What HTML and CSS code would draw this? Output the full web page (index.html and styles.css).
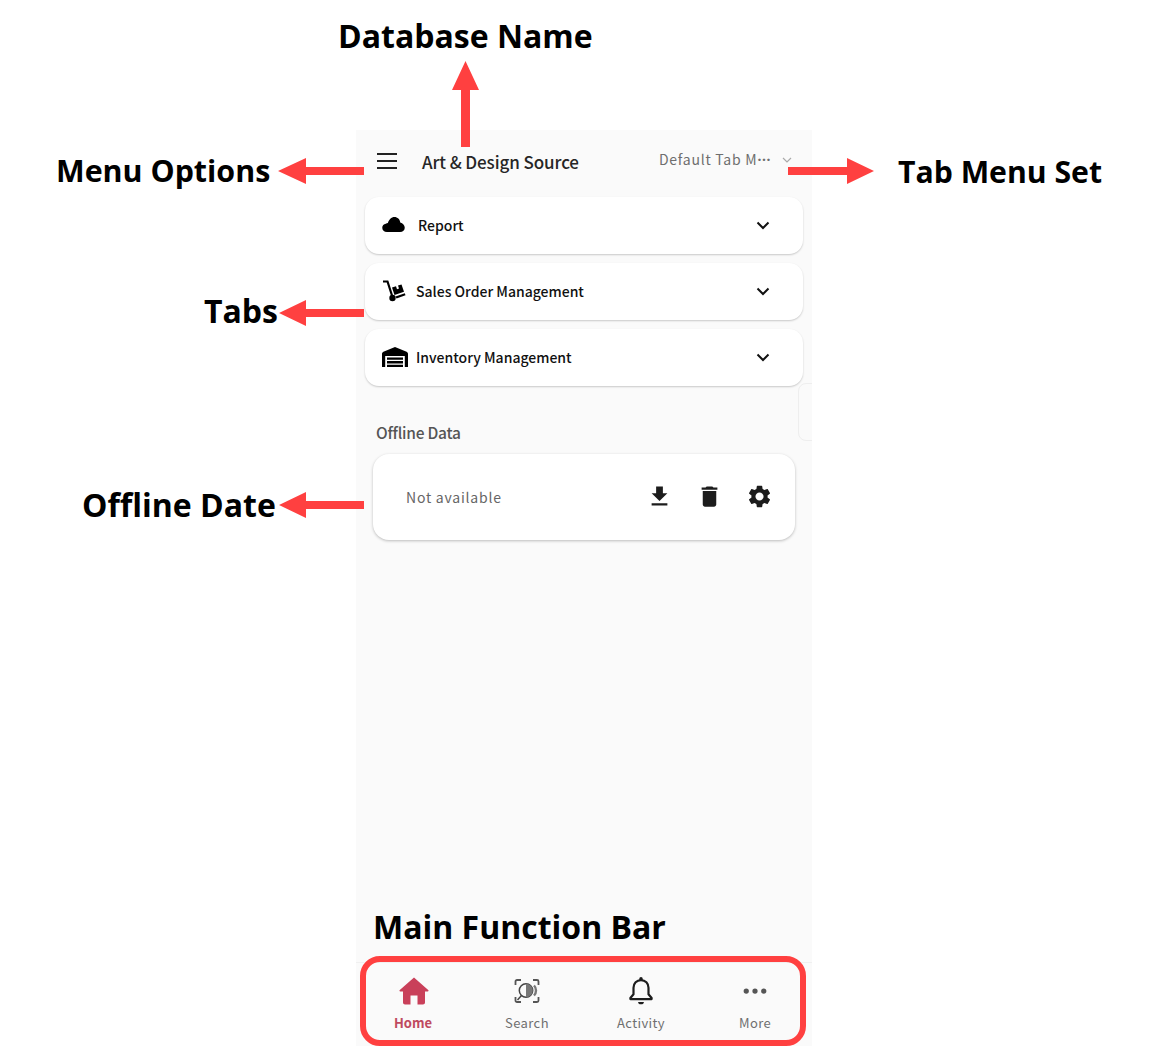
FILE: index.html
```html
<!DOCTYPE html>
<html lang="en">
<head>
<meta charset="utf-8">
<title>Home screen guide</title>
<link rel="stylesheet" href="styles.css">
</head>
<body>
<main class="canvas">
  <section class="phone">
    <header class="topbar">
      <svg class="menu-icon" viewBox="0 0 20 16"><path d="M0 1h20M0 8h20M0 15h20"/></svg>
      <h1 class="db-name">Art &amp; Design Source</h1>
      <span class="tab-set">Default Tab M<span class="tab-dots">···</span></span>
      <svg class="tab-set-caret" viewBox="0 0 10 6"><path d="M1 1l4 4 4-4"/></svg>
    </header>

    <div class="tabs">
      <div class="tab tab-report">
        <svg class="tab-icon icon-cloud" viewBox="0 0 24 16"><path d="M5 16C2 16 0 14 0 11.500 0 9.300 1.600 7.500 3.800 7.200 4.500 6.800 5.200 6.500 6 6.500 7 2.800 9.700 0 13 0c3.300 0 5.800 2.500 6.200 5.800C22 6.600 24 8.900 24 11.400 24 14 22 16 19 16z"/></svg>
        <span class="tab-label">Report</span>
        <svg class="chevron" viewBox="0 0 14 9"><path d="M1.500 1.500L7 7l5.500-5.500"/></svg>
      </div>
      <div class="tab tab-sales">
        <svg class="tab-icon icon-dolly" viewBox="0 0 24 24"><path class="dolly-line" d="M1 2.500h4.500l4.500 14"/><circle cx="10.500" cy="19" r="3.200"/><path d="M14.500 19.500l9-3.200-.7-2-9.300 3.200zM10 8.500l4-1.300 1 3 2-.7-1-3 3.500-1.100 2.500 7.400-9.500 3.200z"/></svg>
        <span class="tab-label">Sales Order Management</span>
        <svg class="chevron" viewBox="0 0 14 9"><path d="M1.500 1.500L7 7l5.500-5.500"/></svg>
      </div>
      <div class="tab tab-inv">
        <svg class="tab-icon icon-ware" viewBox="0 0 26 20"><path d="M0 20V7c0-1 .5-1.800 1.400-2.300L13 0l11.600 4.700c.9.5 1.400 1.300 1.400 2.300V20h-3.200V9H3.200v11zM5 10.500h16v2.300H5zM5 14.100h16v2.300H5zM5 17.700h16V20H5z"/></svg>
        <span class="tab-label">Inventory Management</span>
        <svg class="chevron" viewBox="0 0 14 9"><path d="M1.500 1.500L7 7l5.500-5.500"/></svg>
      </div>
    </div>

    <div class="peek"></div>

    <h2 class="offline-title">Offline Data</h2>
    <div class="offline-card">
      <span class="offline-text">Not available</span>
      <div class="offline-actions">
        <svg class="action" viewBox="0 0 24 24"><path d="M19 9h-4V3H9v6H5l7 7 7-7zM5 18v2h14v-2H5z"/></svg>
        <svg class="action" viewBox="0 0 24 24"><path d="M6 19c0 1.100.9 2 2 2h8c1.100 0 2-.9 2-2V7H6v12zM19 4h-3.500l-1-1h-5l-1 1H5v2h14V4z"/></svg>
        <svg class="action" viewBox="0 0 24 24"><path d="M19.140 12.940c.04-.3.06-.61.06-.94 0-.32-.02-.64-.07-.94l2.030-1.580c.18-.14.23-.41.12-.61l-1.920-3.320c-.12-.22-.37-.29-.59-.22l-2.390.96c-.5-.38-1.030-.7-1.620-.94l-.36-2.540c-.04-.24-.24-.41-.48-.41h-3.840c-.24 0-.43.17-.47.41l-.36 2.540c-.59.24-1.130.57-1.620.94l-2.390-.96c-.22-.08-.47 0-.59.22L2.740 8.870c-.12.21-.08.47.12.61l2.030 1.580c-.05.3-.09.63-.09.94s.02.64.07.94l-2.030 1.580c-.18.14-.23.41-.12.61l1.920 3.320c.12.22.37.29.59.22l2.390-.96c.5.38 1.030.7 1.620.94l.36 2.540c.05.24.24.41.48.41h3.840c.24 0 .44-.17.47-.41l.36-2.540c.59-.24 1.130-.56 1.620-.94l2.390.96c.22.08.47 0 .59-.22l1.920-3.320c.12-.22.07-.47-.12-.61l-2.010-1.580zM12 15.600c-1.980 0-3.600-1.620-3.600-3.600s1.620-3.600 3.600-3.600 3.600 1.620 3.600 3.600-1.620 3.600-3.600 3.600z"/></svg>
      </div>
    </div>

    <nav class="bottom-nav">
      <div class="nav-item nav-active">
        <svg class="nav-icon nav-home" viewBox="0 0 30 27"><path d="M15 0L.8 12.600c-.7.6-.3 1.400.5 1.400H4v11c0 1.100.9 2 2 2h5.500v-9h7v9H24c1.100 0 2-.9 2-2V14h2.700c.8 0 1.200-.8.5-1.400z"/></svg>
        <span class="nav-label">Home</span>
      </div>
      <div class="nav-item">
        <svg class="nav-icon nav-scan" viewBox="0 0 30 30"><path class="scan-corners" d="M3.500 9V5.500c0-.8.7-1.500 1.500-1.500h4M21 4h4c.8 0 1.500.7 1.500 1.500V9M26.500 21v3.500c0 .8-.7 1.500-1.500 1.500h-4M9 26H5c-.8 0-1.500-.7-1.500-1.500V21"/><circle class="scan-lens" cx="14" cy="14.500" r="6.700"/><path class="scan-fill" d="M14 7.800c3.700 0 6.700 3 6.700 6.700s-3 6.700-6.700 6.700z"/><path class="scan-bars" d="M22 9.500c1.300 1.300 2 3 2 5s-.7 3.700-2 5"/><path class="scan-tail" d="M9.500 19.500L5.500 24"/></svg>
        <span class="nav-label">Search</span>
      </div>
      <div class="nav-item">
        <svg class="nav-icon nav-bell" viewBox="0 0 24 26"><path class="bell-body" d="M12 3.500c-3.800 0-6.500 3-6.500 6.700v5.600L2.800 19v1h18.400v-1l-2.700-3.200v-5.600c0-3.700-2.700-6.700-6.500-6.700z"/><path class="bell-solid" d="M10.500 3.500V2.300a1.500 1.500 0 0 1 3 0v1.200zM9.500 22.500h5a2.500 2 0 0 1-5 0z"/></svg>
        <span class="nav-label">Activity</span>
      </div>
      <div class="nav-item">
        <svg class="nav-icon nav-more" viewBox="0 0 24 24"><circle cx="5" cy="12" r="2.100"/><circle cx="12" cy="12" r="2.100"/><circle cx="19" cy="12" r="2.100"/></svg>
        <span class="nav-label">More</span>
      </div>
    </nav>
  </section>

  <span class="note note-db">Database Name</span>
  <span class="note note-menu">Menu Options</span>
  <span class="note note-set">Tab Menu Set</span>
  <span class="note note-tabs">Tabs</span>
  <span class="note note-offline">Offline Date</span>
  <span class="note note-bar">Main Function Bar</span>

  <svg class="arrows" viewBox="0 0 1151 1064">
    <polygon points="465.500,61 479,90 470,90 470,147 461,147 461,90 452,90"/>
    <polygon points="278,171 306,158 306,167 364,167 364,175 306,175 306,184"/>
    <polygon points="874,171 847,158 847,167 788,167 788,175 847,175 847,184"/>
    <polygon points="279,313 306,300 306,309 364,309 364,317 306,317 306,326"/>
    <polygon points="279,505 306,492 306,501 364,501 364,509 306,509 306,518"/>
  </svg>
  <div class="bar-frame"></div>
</main>
</body>
</html>
```

FILE: styles.css
```css
* { box-sizing: border-box; }

html, body {
  margin: 0;
  background: #fff;
}

.canvas {
  position: relative;
  width: 1151px;
  height: 1064px;
  overflow: hidden;
  font-family: "Noto Sans CJK SC", "Noto Sans", sans-serif;
}

.phone {
  position: absolute;
  left: 356px;
  top: 130px;
  width: 456px;
  height: 916px;
  background: #fafafa;
  display: flex;
  flex-direction: column;
  overflow: hidden;
}

.topbar {
  height: 67px;
  display: flex;
  align-items: center;
  padding: 0 20px 3px 21px;
  flex: none;
}

.menu-icon {
  width: 20px;
  height: 16px;
  flex: none;
  margin-bottom: 2px;
}
.menu-icon path { stroke: #222; stroke-width: 1.800; fill: none; }

.db-name {
  margin: 0 0 0 25px;
  font-size: 17px;
  line-height: 24px;
  font-weight: 500;
  color: #262626;
  letter-spacing: -.1px;
}

.tab-set {
  margin-left: auto;
  font-size: 14px;
  color: #6e6e6e;
  letter-spacing: .75px;
  line-height: 20px;
  margin-bottom: 5px;
  white-space: nowrap;
}

.tab-dots {
  font-family: "Noto Sans", sans-serif;
  font-weight: 700;
  letter-spacing: .6px;
}

.tab-set-caret {
  width: 10px;
  height: 6px;
  margin-left: 11px;
  margin-bottom: 4px;
  flex: none;
}
.tab-set-caret path { stroke: #aaa; stroke-width: 1.200; fill: none; }

.tabs {
  margin: 0 9px;
  display: flex;
  flex-direction: column;
  gap: 9px;
  flex: none;
}

.tab {
  height: 57px;
  background: #fff;
  border-radius: 14px;
  box-shadow: 0 1px 2px rgba(0, 0, 0, .2);
  display: flex;
  align-items: center;
  padding: 0 33px 2px 17px;
}

.tab-label {
  font-size: 14px;
  font-weight: 500;
  color: #111;
  line-height: 20px;
}

.tab-icon { flex: none; fill: #000; }
.icon-cloud { width: 23px; height: 15px; margin-right: 13px; }
.icon-dolly { width: 24px; height: 24px; margin-right: 10px; }
.dolly-line { fill: none; stroke: #000; stroke-width: 2.200; }
.icon-ware { width: 26px; height: 20px; margin-right: 8px; }

.chevron {
  width: 14px;
  height: 9px;
  margin-left: auto;
  margin-top: 2px;
  flex: none;
}
.chevron path { fill: none; stroke: #111; stroke-width: 2; }

.peek {
  position: absolute;
  left: 442px;
  top: 253px;
  width: 20px;
  height: 58px;
  border: 1px solid #eee;
  border-radius: 8px 0 0 8px;
  background: #fafafa;
}

.offline-title {
  margin: 35px 0 11px 20px;
  font-size: 15.500px;
  line-height: 22px;
  font-weight: 500;
  color: #555;
  letter-spacing: -.25px;
  flex: none;
}

.offline-card {
  margin: 0 17px;
  height: 86px;
  background: #fff;
  border-radius: 16px;
  box-shadow: 0 1px 3px rgba(0, 0, 0, .25);
  display: flex;
  align-items: center;
  padding: 0 22.500px 1px 33px;
  flex: none;
}

.offline-text {
  font-size: 14px;
  color: #666;
  letter-spacing: .78px;
}

.offline-actions {
  margin-left: auto;
  display: flex;
  gap: 23px;
}

.action { width: 27px; height: 27px; fill: #1c1c1c; }

.bottom-nav {
  margin-top: auto;
  height: 84px;
  border-top: 1px solid #f0f0f0;
  display: grid;
  grid-template-columns: repeat(4, 1fr);
  flex: none;
}

.nav-item {
  display: flex;
  flex-direction: column;
  align-items: center;
  padding-top: 13px;
}

.nav-icon { width: 30px; height: 30px; flex: none; }

.nav-label {
  margin-top: 7px;
  font-size: 13px;
  line-height: 19px;
  color: #6f6f6f;
  letter-spacing: .4px;
}

.nav-active .nav-label {
  color: #bf4a60;
  font-weight: 700;
  letter-spacing: 0;
}

.nav-home { fill: #c9405a; margin-left: 2px; }

.scan-corners { fill: none; stroke: #555; stroke-width: 1.800; }
.scan-lens { fill: none; stroke: #444; stroke-width: 1.500; }
.scan-fill { fill: #777; }
.scan-bars { fill: none; stroke: #777; stroke-width: 2.400; }
.scan-tail { stroke: #444; stroke-width: 1.500; }

.bell-body { fill: none; stroke: #1d1d1d; stroke-width: 1.900; stroke-linejoin: round; }
.bell-solid { fill: #1d1d1d; }

.nav-more { fill: #555; }

.note {
  position: absolute;
  font-family: "Open Sans", sans-serif;
  font-weight: 700;
  font-size: 32px;
  line-height: 42px;
  color: #000;
  white-space: nowrap;
}

.note-db { left: 338px; top: 15px; }
.note-menu { left: 56px; top: 150px; font-size: 30.400px; }
.note-set { left: 898px; top: 151px; font-size: 30.200px; }
.note-tabs { left: 204px; top: 290px; }
.note-offline { left: 82px; top: 484px; }
.note-bar { left: 373px; top: 906px; }

.arrows {
  position: absolute;
  left: 0;
  top: 0;
  width: 1151px;
  height: 1064px;
  fill: #ff4040;
  pointer-events: none;
}

.bar-frame {
  position: absolute;
  left: 360px;
  top: 956px;
  width: 446px;
  height: 90px;
  border: 6px solid #ff4040;
  border-radius: 20px;
}
```
